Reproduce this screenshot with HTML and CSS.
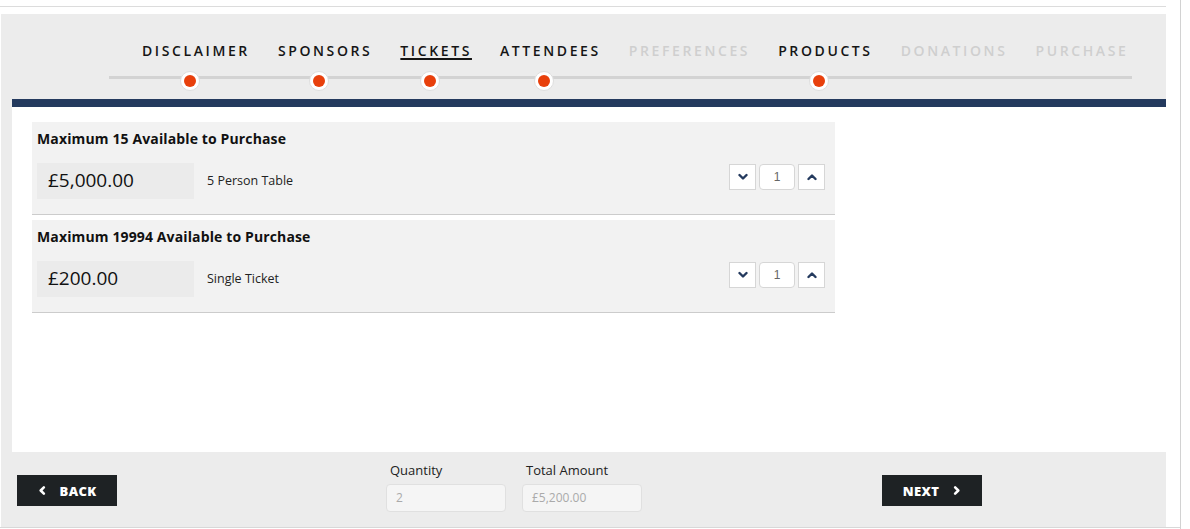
FILE: index.html
```html
<!DOCTYPE html>
<html lang="en">
<head>
<meta charset="utf-8">
<title>Products</title>
<link rel="stylesheet" href="styles.css">
</head>
<body>
<div class="page">
  <div class="topline"></div>
  <div class="panel">
    <nav class="steps">
      <ul class="step-list">
        <li class="step done"><span>DISCLAIMER</span><i class="dot"></i></li>
        <li class="step done"><span>SPONSORS</span><i class="dot"></i></li>
        <li class="step done current"><span>TICKETS</span><i class="dot"></i></li>
        <li class="step done"><span>ATTENDEES</span><i class="dot"></i></li>
        <li class="step off"><span>PREFERENCES</span></li>
        <li class="step done"><span>PRODUCTS</span><i class="dot"></i></li>
        <li class="step off"><span>DONATIONS</span></li>
        <li class="step off"><span>PURCHASE</span></li>
      </ul>
      <div class="track"></div>
    </nav>
    <div class="bar"></div>
    <main class="content">
      <section class="card">
        <h3 class="card-title">Maximum 15 Available to Purchase</h3>
        <div class="card-row">
          <div class="price">£5,000.00</div>
          <div class="desc">5 Person Table</div>
          <div class="stepper">
            <button class="step-btn" type="button"><svg viewBox="0 0 10 10" width="10" height="10"><polyline points="1.5,3 5,6.5 8.5,3" /></svg></button>
            <div class="qty">1</div>
            <button class="step-btn" type="button"><svg viewBox="0 0 10 10" width="10" height="10"><polyline points="1.5,7 5,3.5 8.5,7" /></svg></button>
          </div>
        </div>
      </section>
      <section class="card">
        <h3 class="card-title">Maximum 19994 Available to Purchase</h3>
        <div class="card-row">
          <div class="price">£200.00</div>
          <div class="desc">Single Ticket</div>
          <div class="stepper">
            <button class="step-btn" type="button"><svg viewBox="0 0 10 10" width="10" height="10"><polyline points="1.5,3 5,6.5 8.5,3" /></svg></button>
            <div class="qty">1</div>
            <button class="step-btn" type="button"><svg viewBox="0 0 10 10" width="10" height="10"><polyline points="1.5,7 5,3.5 8.5,7" /></svg></button>
          </div>
        </div>
      </section>
    </main>
    <footer class="footer">
      <button class="nav-btn back" type="button"><svg viewBox="0 0 10 10" width="9" height="9"><polyline points="6.5,1.5 3,5 6.5,8.5" /></svg><span>BACK</span></button>
      <div class="fields">
        <label class="field">
          <span class="field-label">Quantity</span>
          <span class="field-input">2</span>
        </label>
        <label class="field">
          <span class="field-label">Total Amount</span>
          <span class="field-input">£5,200.00</span>
        </label>
      </div>
      <button class="nav-btn next" type="button"><span>NEXT</span><svg viewBox="0 0 10 10" width="9" height="9"><polyline points="3.5,1.5 7,5 3.5,8.5" /></svg></button>
    </footer>
  </div>
  <div class="bottomline"></div>
</div>
</body>
</html>
```
FILE: styles.css
```css
* { box-sizing: border-box; }
html, body { margin: 0; padding: 0; background: #ffffff; }
body { font-family: "Open Sans", "Noto Sans", Arial, sans-serif; color: #111; }

.page {
  width: 1181px;
  height: 529px;
  padding-top: 6px;
  border-right: 1px solid #d2d2d2;
}
.topline { width: 1166px; height: 1px; background: #dcdcdc; }

.panel {
  margin-top: 7px;
  margin-left: 1px;
  width: 1165px;
  padding-left: 11px;
  background: #ececec;
}

/* steps */
.steps { height: 85px; padding-top: 27px; }
.step-list {
  list-style: none;
  margin: 0 0 0 130px;
  padding: 0;
  display: flex;
  gap: 28px;
}
.step {
  position: relative;
  font-size: 14px;
  line-height: 20px;
  font-weight: 600;
  letter-spacing: 2.6px;
  color: #151515;
}
.step.off { color: #cfcfcf; }
.step.current span { text-decoration: underline; text-underline-offset: 2px; text-decoration-thickness: 1.5px; }
.dot {
  position: absolute;
  top: 30px;
  left: calc(50% - 16px);
  width: 20px;
  height: 20px;
  border-radius: 50%;
  background: #ffffff;
  border: 1px solid #dedede;
  display: flex;
  align-items: center;
  justify-content: center;
}
.dot::after {
  content: "";
  width: 12px;
  height: 12px;
  border-radius: 50%;
  background: #e8400c;
}
.track {
  margin: 15px 0 0 97px;
  width: 1023px;
  height: 3px;
  background: #d3d3d3;
}

.bar { height: 8px; background: #243a5e; }

/* content */
.content {
  height: 345px;
  background: #ffffff;
  padding: 15px 0 0 20px;
}
.card {
  width: 803px;
  background: #f2f2f2;
  border-bottom: 1px solid #cccccc;
  padding: 7px 10px 15px 5px;
  margin-bottom: 5px;
}
.card-title {
  margin: 0;
  font-size: 14px;
  line-height: 20px;
  font-weight: 700;
  letter-spacing: 0.13px;
  color: #111;
}
.card-row {
  margin-top: 14px;
  display: flex;
  align-items: center;
}
.price {
  width: 157px;
  height: 36px;
  background: #ebebeb;
  padding-left: 11px;
  font-size: 19px;
  line-height: 34px;
  color: #111;
}
.desc {
  margin-left: 13px;
  margin-bottom: 2px;
  font-size: 12.5px;
  color: #222;
}
.stepper {
  margin-left: auto;
  align-self: flex-start;
  margin-top: 1px;
  display: flex;
  gap: 3px;
}
.step-btn {
  width: 27px;
  height: 26px;
  padding: 0;
  margin: 0;
  background: #ffffff;
  border: 1px solid #d6d6d6;
  display: flex;
  align-items: center;
  justify-content: center;
}
.step-btn svg polyline { fill: none; stroke: #243a5e; stroke-width: 2.4; stroke-linecap: round; stroke-linejoin: round; }
.qty {
  width: 36px;
  height: 26px;
  background: #ffffff;
  border: 1px solid #d6d6d6;
  border-radius: 4px;
  font-family: Arial, "Liberation Sans", sans-serif;
  font-size: 12px;
  line-height: 24px;
  text-align: center;
  color: #666;
}

/* footer */
.footer {
  height: 75px;
  display: flex;
  align-items: flex-start;
  padding-left: 5px;
}
.nav-btn {
  margin-top: 23px;
  width: 100px;
  height: 31px;
  padding: 0;
  border: 0;
  background: #1e2224;
  color: #ffffff;
  font-family: "Open Sans", Arial, sans-serif;
  font-weight: 800;
  font-size: 13px;
  letter-spacing: 0.3px;
  display: flex;
  align-items: center;
  justify-content: center;
  gap: 13px;
}
.nav-btn svg polyline { fill: none; stroke: #ffffff; stroke-width: 2.8; stroke-linecap: round; stroke-linejoin: round; }
.fields {
  margin-left: 269px;
  margin-top: 9px;
  display: flex;
  gap: 16px;
}
.field { display: flex; flex-direction: column; width: 120px; }
.field-label {
  padding-left: 4px;
  font-size: 13px;
  line-height: 18px;
  color: #222;
}
.field-input {
  margin-top: 5px;
  height: 28px;
  background: #f5f5f5;
  border: 1px solid #e0e0e0;
  border-radius: 4px;
  padding-left: 9px;
  font-size: 12px;
  line-height: 26px;
  color: #aaaaaa;
}
.next { margin-left: 240px; }

.bottomline { width: 1180px; height: 1px; background: #d8d8d8; }
```
